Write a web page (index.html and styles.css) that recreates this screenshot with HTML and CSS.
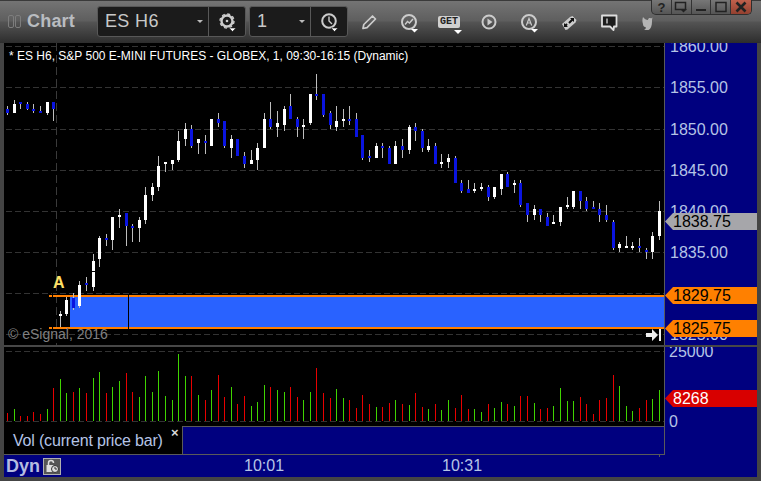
FILE: index.html
```html
<!DOCTYPE html>
<html lang="en">
<head>
<meta charset="utf-8">
<title>Chart</title>
<link rel="stylesheet" href="styles.css">
</head>
<body>
<div class="window">
  <header class="titlebar">
    <div class="grip"><i></i><i></i></div>
    <div class="app-title">Chart</div>
    <div class="combo combo-symbol">
      <span class="combo-value">ES H6</span><span class="caret"></span>
      <span class="combo-btn">
        <svg width="24" height="24" viewBox="0 0 24 24"><circle cx="11" cy="11" r="5.500" fill="none" stroke="#ccc" stroke-width="2.400"/><circle cx="11" cy="11" r="7" fill="none" stroke="#ccc" stroke-width="1.400" stroke-dasharray="3 2.500"/><circle cx="11" cy="11" r="1.300" fill="#ccc"/><path d="M13 18h7l-3.500 3.500z" fill="#fff" stroke="#1b1b1b" stroke-width=".6"/></svg>
      </span>
    </div>
    <div class="combo combo-interval">
      <span class="combo-value">1</span><span class="caret"></span>
      <span class="combo-btn">
        <svg width="24" height="24" viewBox="0 0 24 24"><circle cx="11" cy="11" r="6.800" fill="none" stroke="#ccc" stroke-width="2"/><path d="M11 6.500v4.500l3 3" fill="none" stroke="#ccc" stroke-width="1.400"/><path d="M13 18h7l-3.500 3.500z" fill="#fff" stroke="#1b1b1b" stroke-width=".6"/></svg>
      </span>
    </div>
    <div class="tools">
      <span class="tool"><svg width="24" height="24" viewBox="0 0 24 24"><path d="M6 18.500l.8-4L15.500 6l3 3-8.500 8.600z" fill="none" stroke="#ccc" stroke-width="1.700" stroke-linejoin="round"/></svg></span>
      <span class="tool"><svg width="24" height="24" viewBox="0 0 24 24"><circle cx="12" cy="12" r="7" fill="none" stroke="#ccc" stroke-width="2"/><path d="M8 14.500l2.500-3 2 1.500 3.500-4" fill="none" stroke="#ccc" stroke-width="1.500"/><path d="M14 19h7l-3.500 3.500z" fill="#fff"/></svg></span>
      <span class="tool"><span class="get">GET</span><svg class="get-caret" width="8" height="4" viewBox="0 0 8 4"><path d="M0 0h8L4 4z" fill="#fff"/></svg></span>
      <span class="tool"><svg width="24" height="24" viewBox="0 0 24 24"><circle cx="12" cy="12" r="6.500" fill="none" stroke="#ccc" stroke-width="2"/><path d="M10.500 8.500l5 3.500-5 3.500z" fill="#ccc"/></svg></span>
      <span class="tool"><svg width="24" height="24" viewBox="0 0 24 24"><circle cx="12" cy="12" r="7" fill="none" stroke="#ccc" stroke-width="2"/><path d="M9.300 15.500l2.700-7 2.700 7M10.300 13h3.400" fill="none" stroke="#ccc" stroke-width="1.200"/><path d="M14 19h7l-3.500 3.500z" fill="#fff"/></svg></span>
      <span class="tool"><svg width="24" height="24" viewBox="0 0 24 24"><path d="M5 14l8-7 2.500-1 4 4-1 2.500-8 7-2 .5z" fill="#ccc"/><path d="M13 8h4v4l-1.300-1.300-3 3-1.400-1.400 3-3zM11 17H7v-4l1.300 1.300 1-1 1.400 1.400-1 1z" fill="#111"/></svg></span>
      <span class="tool"><svg width="24" height="24" viewBox="0 0 24 24"><path d="M5 5.500h14.500v11H17l-.5 3.500-3.500-3.500H5z" fill="#1c1c1c" stroke="#ddd" stroke-width="1.800" stroke-linejoin="round"/><path d="M10 8.500v5" stroke="#ddd" stroke-width="1.300"/></svg></span>
      <span class="tool tool-bird"><svg width="24" height="24" viewBox="0 0 24 24"><path d="M9 7c1.500 2 3 3 5 3 .2-2 2-2.400 3-1.500l1.500-1-.5 2.500v2c0 4-1.500 7-3.500 8H10c2-1 2-2 1.500-3-2 0-2.500-1.500-2.500-3-.8-2-.8-5 0-7z" fill="#b4b4b4"/></svg></span>
    </div>
    <nav class="win-buttons">
      <span class="win-btn win-help">?</span>
      <span class="win-btn"><svg width="14" height="12" viewBox="0 0 14 12"><path d="M1.500 1.500h10v7h-10z" fill="none" stroke="#222" stroke-width="1.500"/><path d="M6 8h7l-3.500 3.500z" fill="#222"/></svg></span>
      <span class="win-btn"><svg width="12" height="12" viewBox="0 0 12 12"><path d="M1 9h10" stroke="#222" stroke-width="2"/></svg></span>
      <span class="win-btn"><svg width="12" height="12" viewBox="0 0 12 12"><path d="M1 1.500h10v9H1z" fill="none" stroke="#222" stroke-width="1.500"/></svg></span>
      <span class="win-btn win-close"><svg width="12" height="12" viewBox="0 0 12 12"><path d="M1.500 1.500l9 9M10.500 1.500l-9 9" stroke="#222" stroke-width="2.600"/></svg></span>
    </nav>
  </header>

  <div class="pane pane-price">
    <svg id="price" class="plot" width="660" height="302" viewBox="4 43 660 302"></svg>
    <div class="axis">
      <svg class="axis-labels" width="92" height="302" viewBox="665 43 92 302">
        <text x="670" y="52">1860.00</text>
        <text x="670" y="93">1855.00</text>
        <text x="670" y="135">1850.00</text>
        <text x="670" y="176">1845.00</text>
        <text x="670" y="217">1840.00</text>
        <text x="670" y="258">1835.00</text>
        <text x="670" y="340">1825.00</text>
      </svg>
      <span class="flag flag-last">1838.75</span>
      <span class="flag flag-high">1829.75</span>
      <span class="flag flag-low">1825.75</span>
    </div>
  </div>
  <div class="divider"></div>
  <div class="pane pane-volume">
    <svg id="volume" class="plot" width="660" height="79" viewBox="4 347 660 79"></svg>
    <div class="axis">
      <svg class="axis-labels" width="92" height="107" viewBox="665 347 92 107">
        <text x="669" y="357">25000</text>
        <text x="669" y="427">0</text>
      </svg>
      <span class="flag flag-vol">8268</span>
    </div>
  </div>
  <div class="pane pane-legend">
    <div class="legend"><span class="legend-name">Vol (current price bar)</span><span class="legend-x">×</span></div>
    <div class="legend-fill"></div>
    <div class="axis axis-blank"></div>
  </div>
  <footer class="timebar">
    <span class="dyn">Dyn</span>
    <span class="lock"><svg width="15" height="15" viewBox="0 0 15 15"><path d="M3.500 6V4a2.500 2.500 0 0 1 5 0" fill="none" stroke="#ddd" stroke-width="1.500"/><path d="M1.500 6h7v7h-7z" fill="#ddd"/><circle cx="10" cy="10" r="3.500" fill="#ddd" stroke="#333"/><path d="M10 8v2h2" fill="none" stroke="#333"/></svg></span>
    <span class="time time-first">10:01</span>
    <span class="time time-second">10:31</span>
    <span class="tick"></span>
  </footer>
</div>
<script src="chart.js"></script>
</body>
</html>
```

FILE: styles.css
```css
* { box-sizing: border-box; }
html, body { margin: 0; padding: 0; background: #444; }
body { width: 761px; height: 481px; overflow: hidden; font-family: "Liberation Sans", Arial, sans-serif; }

.window {
  width: 761px; height: 481px; display: flex; flex-direction: column;
  background: #444; padding: 0 4px 4px; position: relative;
}

/* title bar */
.titlebar {
  height: 43px; margin: 0 -4px; display: flex; align-items: center; padding-left: 8px; flex: none;
  background: linear-gradient(#747474 0, #5e5e5e 20px, #545454 21px, #2b2b2b 43px);
  border-top: 1px solid #3a3a3a; position: relative;
}
.grip { display: flex; gap: 1px; width: 19px; margin-top: -1px; }
.grip i { width: 6px; height: 13px; border: 1px solid #7d7d7d; border-radius: 2px; }
.app-title { font-size: 18px; font-weight: 700; color: #b9bcc0; width: 70px; letter-spacing: .2px; margin-top: -1px; }
.combo {
  height: 31px; display: flex; align-items: center; background: #1b1b1b; border: 1px solid #585858;
  border-radius: 3px; position: relative; margin-top: -1px;
}
.combo-symbol { width: 149px; }
.combo-interval { width: 99px; margin-left: 3px; }
.combo-value { color: #c8c8c8; font-size: 18px; padding-left: 7px; flex: 1; letter-spacing: .35px; }
.caret { width: 0; height: 0; border: 3px solid transparent; border-top-color: #bbb; border-bottom-width: 0; margin-right: 5px; }
.combo-btn { width: 37px; height: 29px; border-left: 1px solid #585858; display: flex; align-items: center; justify-content: center; }
.combo-btn svg { margin-left: 2px; }
.tools { display: flex; margin-left: 1px; margin-top: -1px; }
.tool { width: 40px; height: 26px; display: flex; align-items: center; justify-content: center; position: relative; }
.tool-bird { margin-left: -3px; }
.get {
  font: 700 10px "Liberation Mono", monospace; color: #222; background: #d0d0d0; padding: 1px 2px; border-radius: 2px; line-height: 10px;
}
.get-caret { position: absolute; left: 25px; top: 21px; }
.win-buttons {
  position: absolute; top: -1px; right: 9px; width: 101px; height: 15px; display: flex;
  border: 1px solid #2e2e2e; border-top: 0; border-radius: 0 0 5px 5px; overflow: hidden;
  background: linear-gradient(#777, #555);
}
.win-btn { width: 20px; display: flex; align-items: center; justify-content: center; border-right: 1px solid #333; }
.win-btn:last-child { border-right: 0; }
.win-help { font-size: 13px; font-weight: 700; color: #222; }
.win-close { background: linear-gradient(#c0604c, #93402f); }

/* panes */
.pane { display: flex; flex: none; }
.pane-price { height: 302px; }
.pane-volume { height: 79px; }
.pane-legend { height: 29px; }
.divider { height: 2px; flex: none; background: #474747; }
.plot { display: block; background: #000; flex: none; }
.axis { width: 93px; flex: none; background: #00007f; border-left: 1px solid #5a5a5a; position: relative; }
.axis-labels { display: block; overflow: hidden; }
.axis-labels text { font-size: 16px; fill: #b5c4e6; }
.flag {
  position: absolute; left: 0; width: 92px; height: 17px; padding-left: 8px; font-size: 16px; line-height: 17px; color: #000;
  clip-path: polygon(0 50%, 8px 0, 100% 0, 100% 100%, 8px 100%);
}
.flag-last { top: 170px; background: #a6a6aa; }
.flag-high { top: 244px; background: #ff8000; }
.flag-low { top: 277px; background: #ff8000; }
.flag-vol { top: 43px; background: #d80000; color: #fff; }
.pane-volume .axis-labels { position: absolute; top: 0; left: 0; z-index: 1; }
.pane-volume .axis { z-index: 1; }

.legend {
  width: 178px; flex: none; background: #000; border-bottom: 1px solid #5a5a5a; display: flex; position: relative;
  padding-left: 9px; color: #b5c4e6; font-size: 16px; line-height: 29px; letter-spacing: -.18px;
}
.legend-x { position: absolute; left: 167px; top: -8px; color: #d8d8d8; font-size: 13px; font-weight: 700; }
.legend-fill { width: 482px; flex: none; background: #00007f; border: 1px solid #5a5a5a; border-right: 0; }
.axis-blank { border-left-color: #5a5a5a; }

/* time axis */
.timebar { height: 22px; flex: 1; background: #00007f; display: flex; align-items: center; padding-left: 2px; position: relative; }
.dyn { font-size: 18px; font-weight: 700; color: #b5bbe0; width: 37px; }
.lock {
  width: 18px; height: 17px; background: #555; border: 1px solid #b0b0b0; display: flex; align-items: center; justify-content: center;
}
.time { font-size: 16px; color: #b5c4e6; }
.time-first { margin-left: 183px; }
.time-second { margin-left: 158px; }
.tick { position: absolute; left: 655px; top: 0; width: 1px; height: 2px; background: #5a5a5a; }
```

FILE: chart.js
```js
var NS = 'http://www.w3.org/2000/svg';
// x, wickTop, wickBottom, bodyTop, bodyBottom, colour (w/b)
var candles = [
[7,106,115,109,113,'b'],[14,100,113,104,113,'w'],[20,102,109,102,104,'b'],[27,102,110,104,109,'b'],[33,104,113,109,111,'b'],[40,106,113,111,113,'b'],[47,102,115,102,113,'w'],[53,102,121,102,109,'b'],
[60,311,327,314,316,'w'],[66,297,316,300,314,'w'],[73,293,310,298,308,'b'],[79,281,308,285,306,'w'],[86,277,291,283,285,'b'],[93,254,291,261,287,'w'],[99,236,267,238,259,'w'],[106,234,246,238,240,'b'],[112,217,250,217,240,'w'],[119,209,228,215,217,'w'],[126,213,246,213,226,'b'],[132,224,242,226,228,'b'],[139,217,242,220,228,'w'],[145,187,224,195,220,'w'],[152,183,201,187,195,'w'],[158,156,191,166,187,'w'],[165,162,172,162,164,'w'],[172,160,170,160,164,'w'],[178,131,162,141,160,'w'],[185,123,146,129,139,'w'],[191,125,148,129,146,'b'],[198,139,154,139,143,'w'],[205,135,154,141,143,'b'],[211,119,146,119,146,'w'],[218,113,127,119,123,'b'],
[224,121,148,121,146,'b'],[231,135,158,139,148,'w'],[237,139,156,139,156,'b'],[244,152,168,156,164,'b'],[251,150,164,160,164,'w'],[257,143,170,148,160,'w'],[264,113,148,119,148,'w'],[270,102,129,119,127,'b'],[277,111,137,123,127,'w'],[284,106,131,109,125,'w'],[290,94,119,106,119,'b'],[297,117,137,119,127,'b'],[303,119,139,125,127,'w'],[310,94,125,94,123,'w'],[316,74,100,94,96,'b'],[323,94,117,94,115,'b'],[330,111,129,113,125,'b'],[336,106,131,121,127,'w'],[343,109,127,119,121,'w'],[349,106,125,119,121,'b'],[356,113,137,119,137,'b'],[362,135,160,135,158,'b'],[369,150,162,156,158,'b'],[376,143,158,146,158,'w'],[382,143,158,146,148,'b'],[389,146,164,148,164,'b'],[395,141,164,146,164,'w'],[402,139,158,146,150,'b'],[409,125,154,127,150,'w'],[415,123,141,127,131,'b'],[422,129,152,131,148,'b'],[428,139,152,146,150,'w'],[435,143,164,146,164,'b'],
[441,154,168,162,164,'w'],[448,154,168,158,162,'w'],[455,156,183,158,183,'b'],[461,180,193,183,191,'b'],[468,180,193,189,193,'b'],[474,183,193,189,191,'w'],[481,183,191,187,189,'w'],[488,185,201,187,197,'b'],[494,187,199,187,197,'w'],[501,174,195,174,189,'w'],[507,172,187,174,187,'b'],[514,180,193,183,185,'w'],[520,180,207,183,205,'b'],[527,203,222,203,215,'b'],[534,205,220,209,215,'w'],[540,209,222,209,215,'b'],[547,213,226,217,226,'b'],[553,215,224,222,224,'w'],[560,207,226,207,222,'w'],[567,197,209,205,207,'w'],[573,191,209,191,207,'w'],[580,191,209,191,201,'b'],[586,197,211,201,209,'b'],[593,201,209,207,209,'b'],[599,203,222,209,215,'b'],[606,205,222,215,220,'b'],[613,220,250,222,248,'b'],[619,242,252,244,248,'w'],[626,236,248,246,248,'w'],[632,242,250,246,248,'w'],[639,238,252,246,248,'b'],[646,248,259,250,252,'b'],[652,232,259,236,252,'w'],[659,201,240,211,236,'w']
];

// bar top, measured in thirds of a pixel below y=345, and colour
var vols = [
[204,'r'],[192,'g'],[213,'r'],[213,'r'],[201,'r'],[207,'r'],[192,'g'],[129,'r'],[102,'g'],[144,'g'],[141,'r'],[129,'g'],[144,'r'],[99,'g'],[81,'g'],[144,'r'],[126,'g'],[108,'g'],[84,'r'],[141,'r'],[156,'g'],[93,'g'],[141,'g'],[78,'g'],[153,'g'],[165,'g'],[27,'g'],[93,'g'],[93,'r'],[150,'g'],[165,'r'],[135,'g'],[90,'r'],
[156,'r'],[126,'g'],[177,'r'],[153,'r'],[183,'g'],[171,'g'],[120,'g'],[126,'r'],[135,'g'],[141,'g'],[126,'r'],[156,'r'],[165,'g'],[141,'g'],[69,'r'],[144,'r'],[159,'r'],[132,'g'],[159,'g'],[165,'r'],[189,'r'],[150,'r'],[177,'r'],[186,'g'],[186,'r'],[174,'r'],[165,'g'],[177,'r'],[180,'g'],[144,'r'],[186,'r'],[192,'g'],[177,'r'],
[195,'g'],[165,'g'],[189,'r'],[150,'r'],[192,'r'],[192,'g'],[201,'g'],[177,'r'],[189,'g'],[171,'g'],[177,'r'],[183,'g'],[153,'r'],[153,'r'],[174,'g'],[192,'r'],[189,'r'],[183,'g'],[129,'g'],[168,'g'],[168,'g'],[156,'r'],[177,'r'],[207,'r'],[165,'r'],[159,'r'],[90,'r'],[123,'g'],[183,'g'],[198,'g'],[189,'r'],[165,'r'],[162,'g'],[135,'g']
];

function el(parent, name, attrs, text) {
  var n = document.createElementNS(NS, name);
  for (var k in attrs) n.setAttribute(k, attrs[k]);
  if (text) n.textContent = text;
  parent.appendChild(n);
  return n;
}
function rect(p, x, y, w, h, fill) { return el(p, 'rect', { x: x, y: y, width: w, height: h, fill: fill }); }
function hdash(p, y) { el(p, 'path', { d: 'M6 ' + (y + .5) + 'H664', stroke: '#333', 'stroke-dasharray': '6 3', fill: 'none' }); }

var price = document.getElementById('price');
[46, 87, 129, 170, 211, 252, 293, 334].forEach(function (y) { hdash(price, y); });
el(price, 'path', { d: 'M56.500 43V345', stroke: '#3a3a3a', 'stroke-dasharray': '8 4', fill: 'none' });

rect(price, 70, 297, 594, 30, '#2962ff');
rect(price, 49, 295, 615, 2, '#ff7f00');
rect(price, 49, 327, 615, 2, '#ff7f00');
rect(price, 52, 293, 1, 52, '#000');
rect(price, 128, 295, 1, 50, '#000');

candles.forEach(function (c) {
  rect(price, c[0], c[1], 1, c[2] - c[1], '#bdbdbd');
  rect(price, c[0] - 1, c[3], 3, Math.max(c[4] - c[3], 2), c[5] === 'w' ? '#fff' : '#0a14e0');
});
rect(price, 92, 271, 3, 1, '#000');

el(price, 'text', { x: 9, y: 60, fill: '#fff', 'font-size': 12 }, '* ES H6, S&P 500 E-MINI FUTURES - GLOBEX, 1, 09:30-16:15 (Dynamic)');
el(price, 'text', { x: 53, y: 288, fill: '#ffe066', 'font-size': 16, 'font-weight': 700 }, 'A');
el(price, 'text', { x: 8, y: 339, fill: '#808080', 'font-size': 14 }, '© eSignal, 2016');
el(price, 'path', { d: 'M646 333h6v-4l6 6-6 6v-4h-6z', fill: '#eee' });
rect(price, 659, 329, 2, 12, '#eee');

var volume = document.getElementById('volume');
[351, 421].forEach(function (y) { hdash(volume, y); });
vols.forEach(function (v, i) {
  var top = 345 + v[0] / 3;
  rect(volume, candles[i][0], top, 1, 421 - top, v[1] === 'r' ? '#e80000' : '#3fd400');
});
```
